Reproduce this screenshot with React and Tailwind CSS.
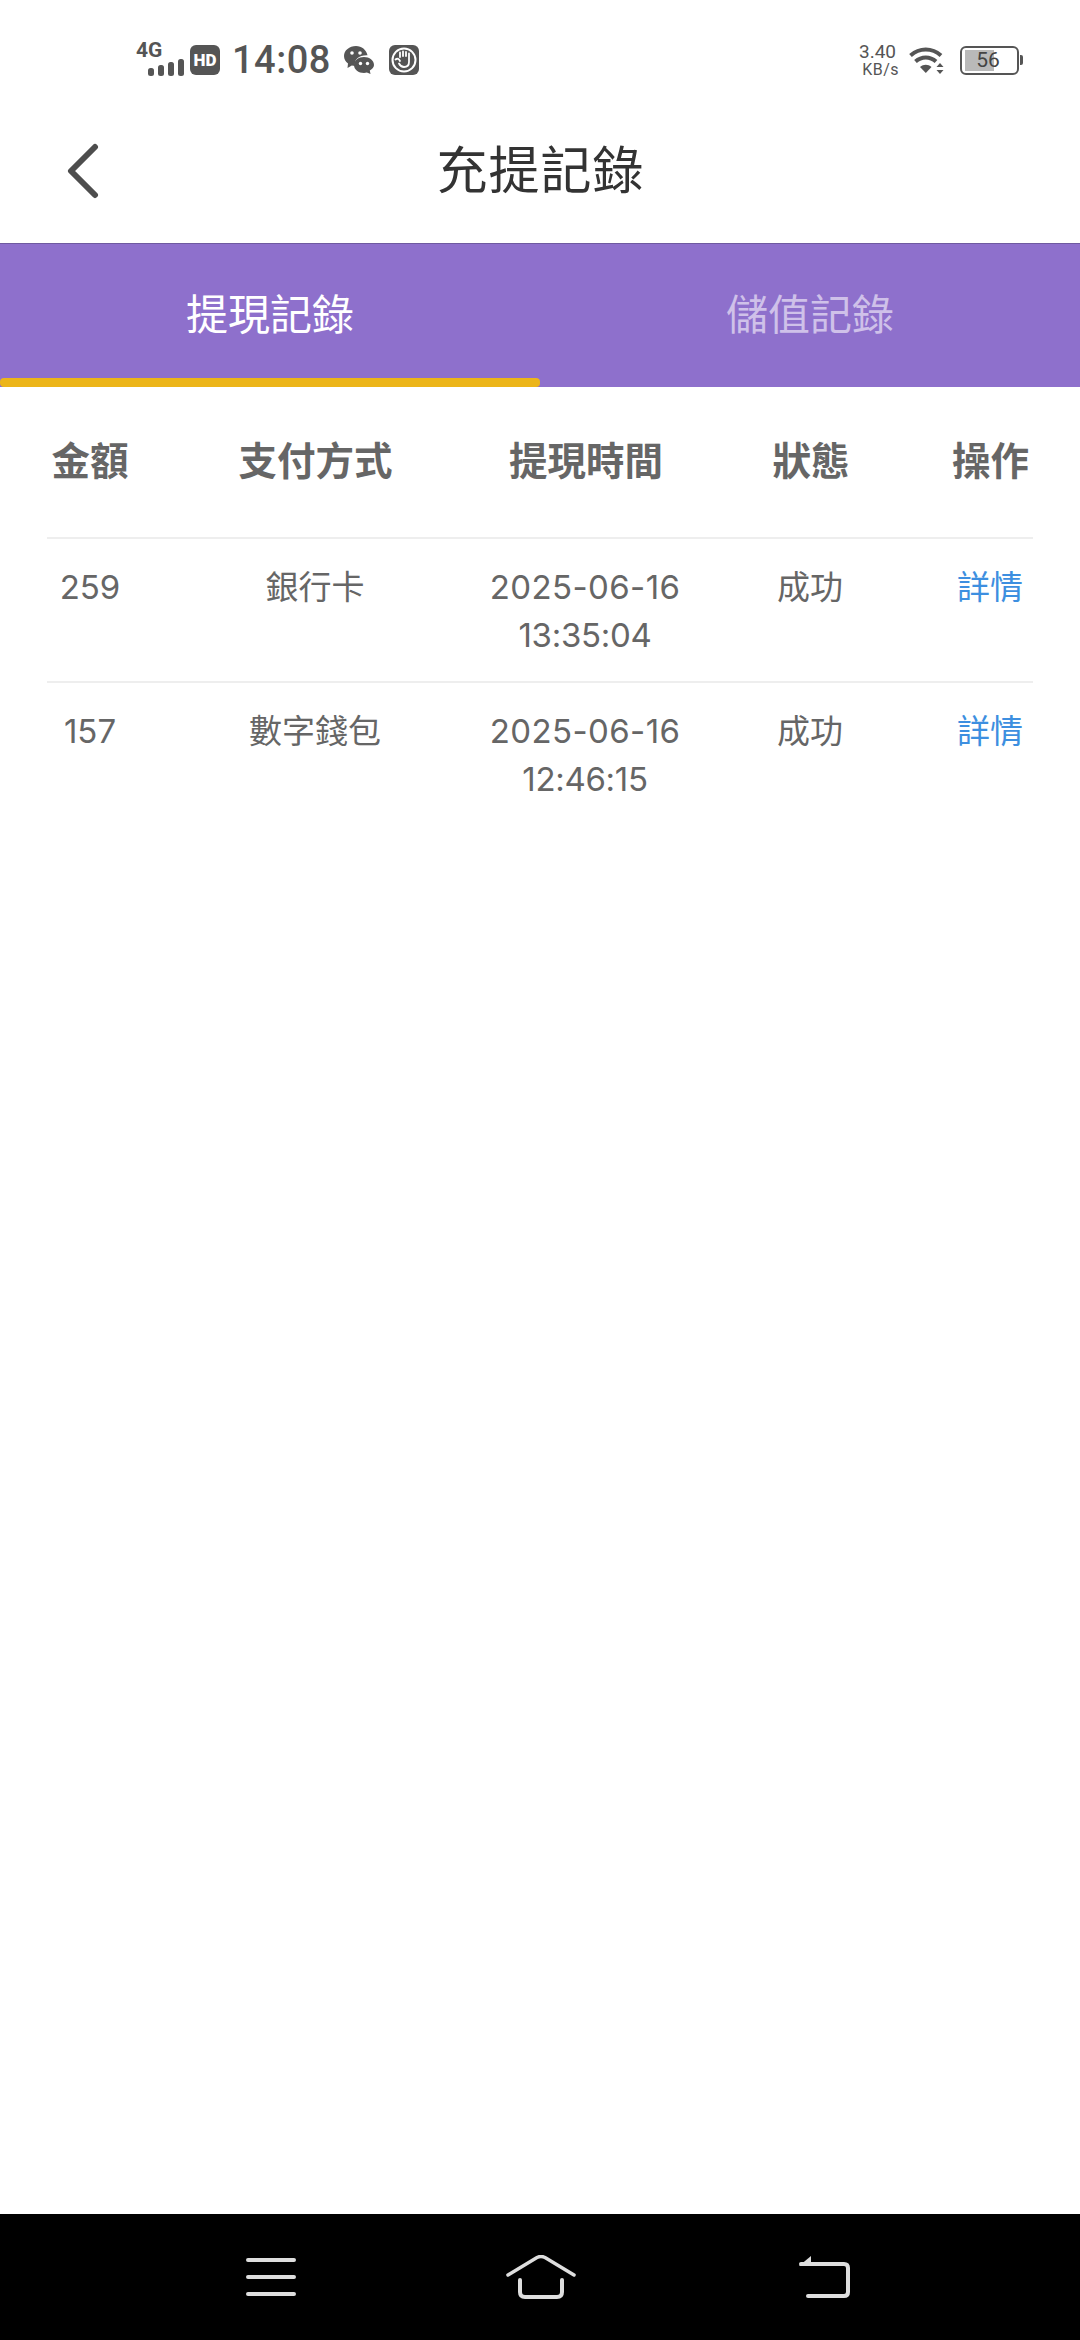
const FONT = "font-['Roboto','Noto_Sans_CJK_TC',sans-serif]";

const columns = "grid grid-cols-[86px_347px_210px_250px_92px] text-center";

const records = [
  { amount: "259", method: "銀行卡", date: "2025-06-16", time: "13:35:04" },
  { amount: "157", method: "數字錢包", date: "2025-06-16", time: "12:46:15" },
];

const SignalBars = () => (
  <svg width="36" height="17" viewBox="0 0 36 17" className="absolute left-[12px] top-[14px]">
    <rect x="0" y="9" width="6" height="8" rx="2.5" fill="#555" />
    <rect x="10" y="6" width="6" height="11" rx="2.5" fill="#555" />
    <rect x="20" y="3" width="6" height="14" rx="2.5" fill="#555" />
    <rect x="30" y="0" width="6" height="17" rx="2.5" fill="#555" />
  </svg>
);

const WeChatIcon = () => (
  <svg width="30" height="28" viewBox="0 0 30 28">
    <path d="M12 0C5.4 0 0 4.400 0 10c0 3 1.600 5.700 4 7.500L3.500 22l4.300-2.600c1 .3 2.100.5 3.200.5C9.800 13.500 15 9 23.500 9.300 22.300 3.900 17.700 0 12 0z" fill="#555" />
    <path d="M20 11c-5.500 0-10 3.500-10 8s4.500 8 10 8c1 0 2-.1 2.900-.4L26.500 28l-.7-3.500C28.400 23 30 21 30 19c0-4.500-4.500-8-10-8z" fill="#555" />
    <circle cx="8" cy="7" r="1.800" fill="#fff" />
    <circle cx="16" cy="7" r="1.800" fill="#fff" />
    <circle cx="16.500" cy="17.500" r="1.700" fill="#fff" />
    <circle cx="23.500" cy="17.500" r="1.700" fill="#fff" />
  </svg>
);

const HandIcon = () => (
  <svg width="30" height="30" viewBox="0 0 30 30">
    <rect width="30" height="30" rx="6" fill="#555" />
    <circle cx="15" cy="15" r="11.500" fill="none" stroke="#fff" strokeWidth="2" />
    <path d="M11 12V7.500M14 11V6.500M17 11V7M20 12V8.500M20 12v5c0 3-2 5-5 5-2.500 0-4-1.500-5-3.500M6.500 14.500c2-1.500 3.500-.5 4.500 1.500" fill="none" stroke="#fff" strokeWidth="1.800" strokeLinecap="round" />
  </svg>
);

const WifiIcon = () => (
  <svg width="38" height="28" viewBox="0 0 38 28">
    <path d="M1.500 9.500C10.500 1.500 23 1.500 32 9.500" fill="none" stroke="#555" strokeWidth="4" />
    <path d="M6.500 15.500C12.500 10 21 10 27 15.500" fill="none" stroke="#555" strokeWidth="4" />
    <path d="M11 21c3.500-3 8-3 11.500 0L16.800 27z" fill="#555" />
    <path d="M31 17l3.500 4h-7zM31 28l-3.500-4h7z" fill="#555" />
  </svg>
);

const Battery = () => (
  <div className="relative flex items-center w-[59px] h-[29px] border-[2.5px] border-[#555] rounded-[6px] bg-white p-[2px]">
    <div className="w-[29px] h-full ml-[1px] bg-[#b9b9b9]" />
    <span className="absolute inset-0 flex items-center justify-center pr-[3px] text-[21px] leading-none text-[#444]">56</span>
    <div className="absolute right-[-6px] w-[3px] h-[10px] bg-[#555] rounded-r-[2px]" />
  </div>
);

const StatusBar = () => (
  <div className="flex h-[100px] items-center justify-between pt-[20px] pl-[136px] pr-[61px] text-[#555]">
    <div className="flex items-center">
      <div className="relative w-[48px] h-[30px]">
        <span className="absolute left-0 top-[-5px] text-[21px] leading-[20px] font-bold">4G</span>
        <SignalBars />
      </div>
      <div className="flex items-center justify-center w-[30px] h-[30px] ml-[6px] rounded-[6px] bg-[#555] text-[17px] font-black leading-none text-white">HD</div>
      <span className="ml-[12px] text-[38px] leading-none font-medium tracking-[0.5px]">14:08</span>
      <div className="ml-[13px] flex"><WeChatIcon /></div>
      <div className="ml-[15px] flex"><HandIcon /></div>
    </div>
    <div className="flex items-center">
      <div className="flex flex-col items-end text-[#555]">
        <span className="pr-[3px] text-[19px] leading-[19px]">3.40</span>
        <span className="text-[16px] leading-[17px] tracking-[0.5px]">KB/s</span>
      </div>
      <div className="ml-[10px] flex"><WifiIcon /></div>
      <div className="ml-[13px]"><Battery /></div>
    </div>
  </div>
);

const Header = () => (
  <div className="relative flex h-[143px] items-center justify-center">
    <svg width="34" height="56" viewBox="0 0 34 56" className="absolute left-[66px] top-[43px]">
      <path d="M29 4L5 28l24 24" fill="none" stroke="#4d4d4d" strokeWidth="6" strokeLinecap="round" strokeLinejoin="round" />
    </svg>
    <h1 className="pl-[1px] text-[51px] leading-none font-normal text-[#333] tracking-[1px]">充提記錄</h1>
  </div>
);

const Tabs = () => (
  <div className="flex h-[144px] bg-[#8e70cc] border-t-[1px] border-[#6f5aa0]">
    <div className="relative flex flex-1 items-center justify-center text-[42px] leading-none text-white">
      提現記錄
      <div className="absolute bottom-0 inset-x-0 h-[9px] rounded-[4px] bg-[#ecb519]" />
    </div>
    <div className="flex flex-1 items-center justify-center text-[42px] leading-none text-[#cfc1e9]">儲值記錄</div>
  </div>
);

const RecordRow = ({ record }) => (
  <div className={`${columns} h-[144px] pt-[24px] border-t-[2px] border-[#eeeeee] font-['Inter','Noto_Sans_CJK_TC',sans-serif] text-[33px] leading-[48px] text-[#666]`}>
    <span>{record.amount}</span>
    <span className="pl-[17px]">{record.method}</span>
    <span className="whitespace-nowrap">
      <span className="tracking-[0.4px]">{record.date}</span>
      <br />
      <span className="tracking-[-0.3px]">{record.time}</span>
    </span>
    <span className="pr-[10px]">成功</span>
    <span className="pl-[8px] text-[#3d8fe0]">詳情</span>
  </div>
);

const RecordsTable = () => (
  <div className="px-[47px]">
    <div className={`${columns} h-[150px] items-center text-[38.5px] leading-none font-bold text-[#666]`}>
      <span>金額</span>
      <span className="pl-[18px]">支付方式</span>
      <span className="pl-[2px]">提現時間</span>
      <span className="pr-[8px]">狀態</span>
      <span className="pl-[9px]">操作</span>
    </div>
    {records.map((record) => (
      <RecordRow key={record.amount} record={record} />
    ))}
  </div>
);

const NavBar = () => (
  <div className="flex h-[126px] items-center pl-[246px] bg-black">
    <svg width="50" height="38" viewBox="0 0 50 38">
      <path d="M2 2h46M2 19h46M2 36h46" fill="none" stroke="#dedede" strokeWidth="4" strokeLinecap="round" />
    </svg>
    <svg width="70" height="44" viewBox="0 0 70 44" className="ml-[210px]">
      <path d="M2 20L31 2.500q4-2 8 0L68 20" fill="none" stroke="#dedede" strokeWidth="3.500" strokeLinecap="round" />
      <path d="M14 25v12q0 5 5 5h32q5 0 5-5V25" fill="none" stroke="#dedede" strokeWidth="4" strokeLinecap="round" />
    </svg>
    <svg width="52" height="42" viewBox="0 0 52 42" className="ml-[222px]">
      <path d="M13 0v10H1z" fill="#dedede" />
      <path d="M3 8h43q4 0 4 4v24q0 4-4 4H10" fill="none" stroke="#dedede" strokeWidth="4" strokeLinecap="round" />
    </svg>
  </div>
);

export default function App() {
  return (
    <div className={`${FONT} flex h-[2340px] w-[1080px] flex-col bg-white`}>
      <StatusBar />
      <Header />
      <Tabs />
      <div className="flex-1">
        <RecordsTable />
      </div>
      <NavBar />
    </div>
  );
}
